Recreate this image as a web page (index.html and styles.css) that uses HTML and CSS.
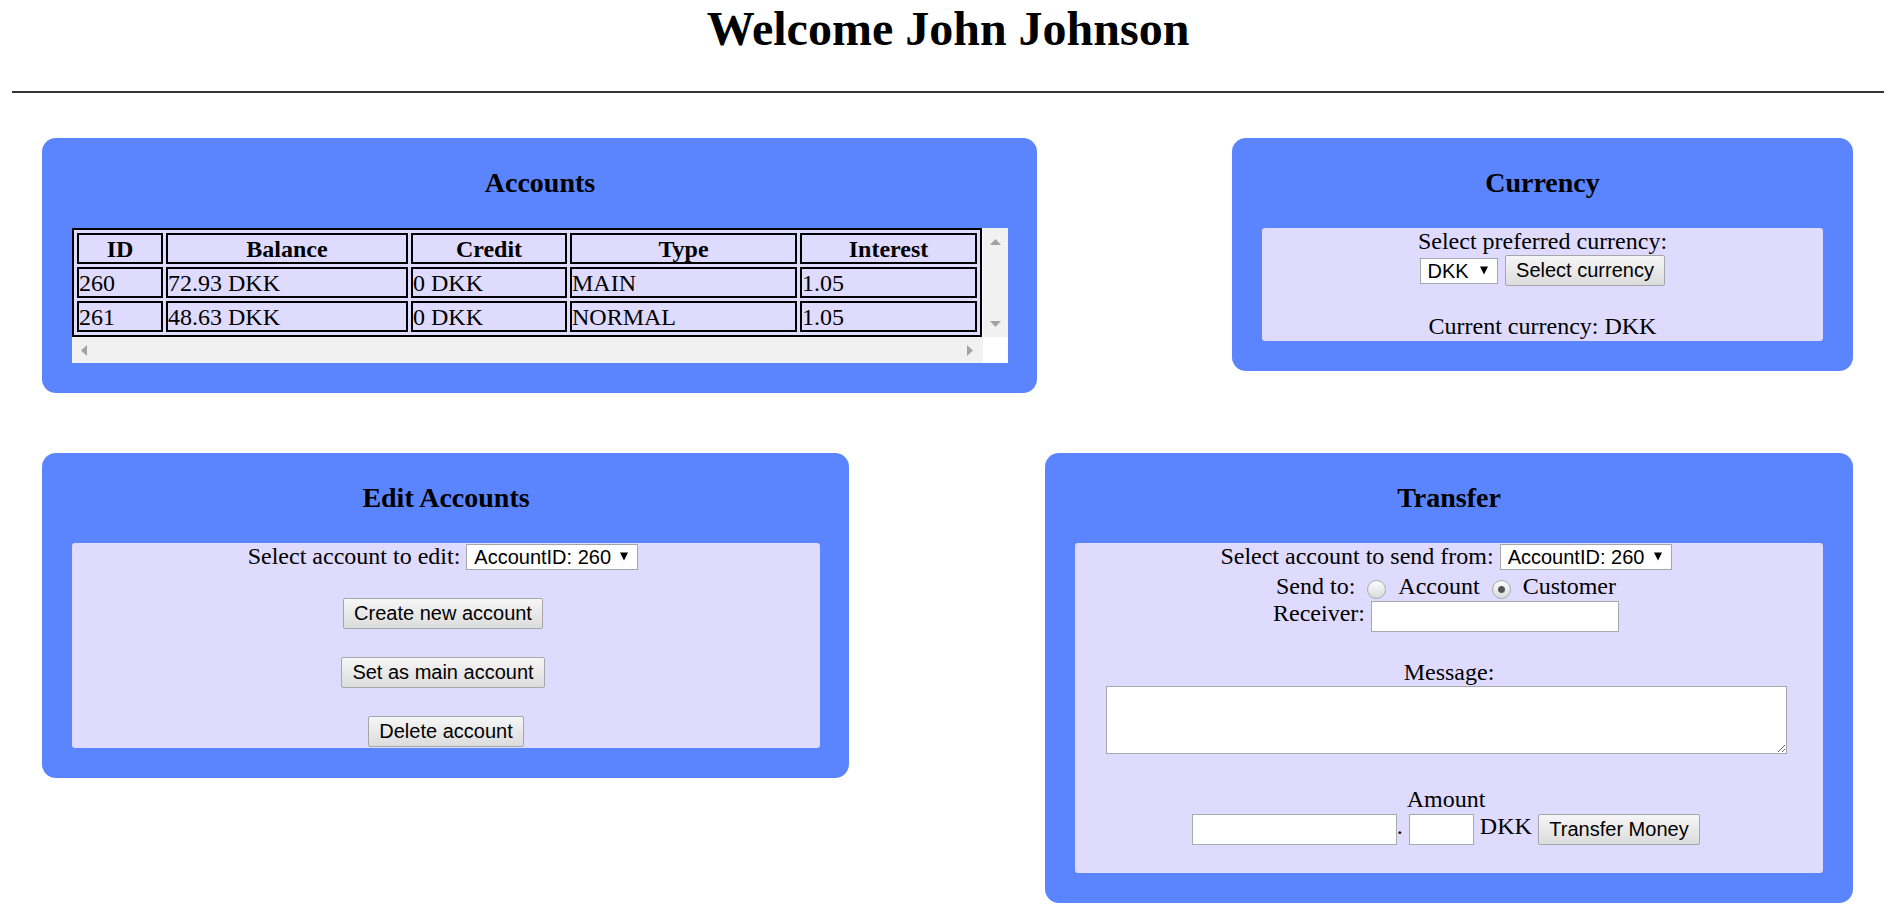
FILE: index.html
```html
<!DOCTYPE html>
<html lang="en">
<head>
<meta charset="utf-8">
<title>Bank</title>
<link rel="stylesheet" href="styles.css">
</head>
<body>
<h1 class="page-title">Welcome John Johnson</h1>
<hr class="rule">

<div class="row row-top">
  <section class="card card-accounts">
    <h3 class="card-title">Accounts</h3>
    <div class="scroller">
      <div class="scroll-view">
        <table class="acct-table">
          <thead>
            <tr>
              <th class="col-id">ID</th>
              <th class="col-balance">Balance</th>
              <th class="col-credit">Credit</th>
              <th class="col-type">Type</th>
              <th class="col-interest">Interest</th>
            </tr>
          </thead>
          <tbody>
            <tr><td>260</td><td>72.93 DKK</td><td>0 DKK</td><td>MAIN</td><td>1.05</td></tr>
            <tr><td>261</td><td>48.63 DKK</td><td>0 DKK</td><td>NORMAL</td><td>1.05</td></tr>
          </tbody>
        </table>
      </div>
      <div class="vbar">
        <svg class="arrow-v" viewBox="0 0 11 6"><polygon points="5.5,0 11,6 0,6"/></svg>
        <svg class="arrow-v" viewBox="0 0 11 6"><polygon points="0,0 11,0 5.5,6"/></svg>
      </div>
      <div class="hbar">
        <svg class="arrow-h" viewBox="0 0 6 11"><polygon points="6,0 6,11 0,5.5"/></svg>
        <svg class="arrow-h" viewBox="0 0 6 11"><polygon points="0,0 6,5.5 0,11"/></svg>
      </div>
      <div class="corner"></div>
    </div>
  </section>

  <section class="card card-currency">
    <h3 class="card-title">Currency</h3>
    <div class="panel panel-currency">
      <div class="line">Select preferred currency:</div>
      <div class="currency-controls">
        <span class="select select-currency">
          <select class="select-input"><option>DKK</option><option>EUR</option><option>USD</option></select>
          <svg class="select-arrow" viewBox="0 0 8 8"><polygon points="0,0 8,0 4,8"/></svg>
        </span>
        <button class="btn" type="button">Select currency</button>
      </div>
      <div class="line current-currency">Current currency: DKK</div>
    </div>
  </section>
</div>

<div class="row row-bottom">
  <section class="card card-edit">
    <h3 class="card-title">Edit Accounts</h3>
    <div class="panel panel-edit">
      <div class="field-line">
        <span>Select account to edit:</span>
        <span class="select select-account">
          <select class="select-input"><option>AccountID: 260</option><option>AccountID: 261</option></select>
          <svg class="select-arrow" viewBox="0 0 8 8"><polygon points="0,0 8,0 4,8"/></svg>
        </span>
      </div>
      <div class="edit-actions">
        <button class="btn" type="button">Create new account</button>
        <button class="btn" type="button">Set as main account</button>
        <button class="btn btn-delete" type="button">Delete account</button>
      </div>
    </div>
  </section>

  <section class="card card-transfer">
    <h3 class="card-title">Transfer</h3>
    <div class="panel panel-transfer">
      <div class="field-line">
        <span>Select account to send from:</span>
        <span class="select select-account">
          <select class="select-input"><option>AccountID: 260</option><option>AccountID: 261</option></select>
          <svg class="select-arrow" viewBox="0 0 8 8"><polygon points="0,0 8,0 4,8"/></svg>
        </span>
      </div>
      <div class="send-line">
        <span>Send to:</span>
        <input class="radio" type="radio" name="sendto">
        <span>Account</span>
        <input class="radio" type="radio" name="sendto" checked>
        <span>Customer</span>
      </div>
      <div class="receiver-line">
        <span>Receiver:</span>
        <input class="text-input receiver-input" type="text">
      </div>
      <div class="line message-label">Message:</div>
      <div class="message-wrap"><textarea class="message-input"></textarea></div>
      <div class="line amount-label">Amount</div>
      <div class="amount-line">
        <input class="text-input amount-whole" type="text">
        <span class="amount-dot">.</span>
        <input class="text-input amount-cents" type="text">
        <span class="amount-currency">DKK</span>
        <button class="btn" type="button">Transfer Money</button>
      </div>
    </div>
  </section>
</div>
</body>
</html>
```

FILE: styles.css
```css
* {
  box-sizing: border-box;
}

html {
  background: #ffffff;
}

body {
  margin: 0 12px;
  font-family: "Liberation Serif", "Times New Roman", serif;
  font-size: 24px;
  color: #000;
}

.page-title {
  margin: 0;
  padding-top: 1px;
  font-size: 48px;
  line-height: 56px;
  font-weight: bold;
  text-align: center;
}

.rule {
  height: 2px;
  margin: 34px 0 0;
  border: 0;
  background: #333333;
}

.row {
  display: flex;
  justify-content: space-between;
  align-items: flex-start;
  padding: 0 31px 0 30px;
}

.row-top {
  margin-top: 45px;
}

.row-bottom {
  margin-top: 60px;
}

.card {
  background: #5b85ff;
  border-radius: 14px;
  padding: 1px 30px 30px;
}

.card-title {
  margin: 28px 0 29px;
  font-size: 28px;
  line-height: 32px;
  font-weight: bold;
  text-align: center;
}

.card-accounts {
  width: 995px;
  padding-right: 29px;
  padding-bottom: 30px;
}

.card-currency {
  width: 621px;
}

.card-edit {
  width: 807px;
  padding-right: 29px;
}

.card-transfer {
  width: 808px;
}

/* ---- accounts table with scrollbars ---- */
.scroller {
  display: grid;
  grid-template-columns: 911px 25px;
  grid-template-rows: auto 26px;
  background: #ffffff;
}

.scroll-view {
  overflow: hidden;
}

.acct-table {
  width: 910px;
  table-layout: fixed;
  border: 2px solid #000;
  border-spacing: 3px 3.25px;
  background: #dfdbff;
}

.acct-table th,
.acct-table td {
  border: 2px solid #000;
  padding: 1px 0 0;
  height: 31px;
  line-height: 26px;
  font-size: 24px;
  white-space: nowrap;
  overflow: hidden;
}

.acct-table th {
  font-weight: bold;
  text-align: center;
}

.acct-table td {
  text-align: left;
}

.col-id { width: 86px; }
.col-balance { width: 242px; }
.col-credit { width: 156px; }
.col-type { width: 227px; }
.col-interest { width: 177px; }

.vbar {
  background: #f1f1f1;
  display: flex;
  flex-direction: column;
  justify-content: space-between;
  align-items: center;
  padding: 11px 0 10px;
}

.hbar {
  background: #f1f1f1;
  display: flex;
  justify-content: space-between;
  align-items: center;
  padding: 0 10px 0 9px;
}

.corner {
  background: #ffffff;
}

.arrow-v {
  width: 11px;
  height: 6px;
  fill: #a3a3a3;
}

.arrow-h {
  width: 6px;
  height: 11px;
  fill: #a3a3a3;
}

/* ---- panels ---- */
.panel {
  background: #dfdbff;
  border-radius: 3px;
  text-align: center;
  line-height: normal;
}

.panel-currency {
  padding-bottom: 1px;
}

.currency-controls {
  display: flex;
  justify-content: center;
  align-items: center;
  gap: 7px;
  height: 31px;
}

.current-currency {
  margin-top: 27px;
}

/* ---- controls ---- */
.select {
  display: inline-flex;
  align-items: center;
  height: 26px;
  border: 1px solid #a6a6a6;
  background: #ffffff;
  padding: 0 9px 0 7px;
  flex: none;
}

.select-input {
  -webkit-appearance: none;
  appearance: none;
  flex: 1;
  min-width: 0;
  height: 24px;
  margin: 0;
  padding: 0;
  border: 0;
  background: transparent;
  font-family: "Liberation Sans", Arial, sans-serif;
  font-size: 20px;
  color: #000;
  outline: none;
}

.select-arrow {
  width: 8px;
  height: 9px;
  flex: none;
  fill: #000;
}

.select-currency {
  width: 78px;
}

.select-account {
  width: 172px;
}

.btn {
  height: 31px;
  margin: 0;
  padding: 0 10.5px;
  border: 1px solid #a6a6a6;
  border-radius: 2px;
  background: linear-gradient(#f6f6f6, #dcdcdc);
  font-family: "Liberation Sans", Arial, sans-serif;
  font-size: 20px;
  color: #000;
  white-space: nowrap;
  flex: none;
}

.text-input {
  height: 31px;
  margin: 0;
  padding: 0 3px;
  border: 1px solid #a9a9a9;
  background: #ffffff;
  font-family: "Liberation Sans", Arial, sans-serif;
  font-size: 20px;
  flex: none;
}

/* ---- edit accounts ---- */
.panel-edit {
  padding-right: 6px;
  padding-bottom: 1px;
}

.field-line {
  display: flex;
  justify-content: center;
  align-items: center;
  gap: 6px;
}

.edit-actions {
  display: flex;
  flex-direction: column;
  align-items: center;
  gap: 28px;
  margin-top: 28px;
}

.btn-delete {
  margin-left: 6px;
}

/* ---- transfer ---- */
.panel-transfer {
  padding: 0 6px 28px 0;
}

.send-line {
  display: flex;
  justify-content: center;
  align-items: flex-start;
  gap: 12px;
  margin-top: 3px;
}

.radio {
  -webkit-appearance: none;
  appearance: none;
  width: 19px;
  height: 19px;
  margin: 7px 0 0;
  border: 1px solid #a9a9a9;
  border-radius: 50%;
  background: linear-gradient(#fdfdfd, #dadada);
  flex: none;
}

.radio:checked {
  background: radial-gradient(circle, #555555 0 3px, rgba(85, 85, 85, 0) 4px), linear-gradient(#fdfdfd, #dadada);
}

.receiver-line {
  display: flex;
  justify-content: center;
  align-items: flex-start;
  gap: 6px;
}

.receiver-input {
  width: 248px;
  margin-top: 1px;
}

.message-label {
  margin-top: 27px;
  padding-left: 6px;
}

.message-wrap {
  margin-top: 0;
}

.message-input {
  display: block;
  width: 681px;
  height: 68px;
  margin: 0 auto;
  border: 1px solid #a9a9a9;
  background: #ffffff;
  font-family: "Liberation Mono", monospace;
  font-size: 20px;
}

.amount-label {
  margin-top: 32px;
}

.amount-line {
  display: flex;
  justify-content: center;
  align-items: flex-start;
}

.amount-line .text-input,
.amount-line .btn {
  margin-top: 1px;
}

.amount-whole {
  width: 205px;
}

.amount-dot {
  width: 6px;
  margin-right: 6px;
}

.amount-cents {
  width: 65px;
}

.amount-currency {
  margin: 0 6px;
}
```
